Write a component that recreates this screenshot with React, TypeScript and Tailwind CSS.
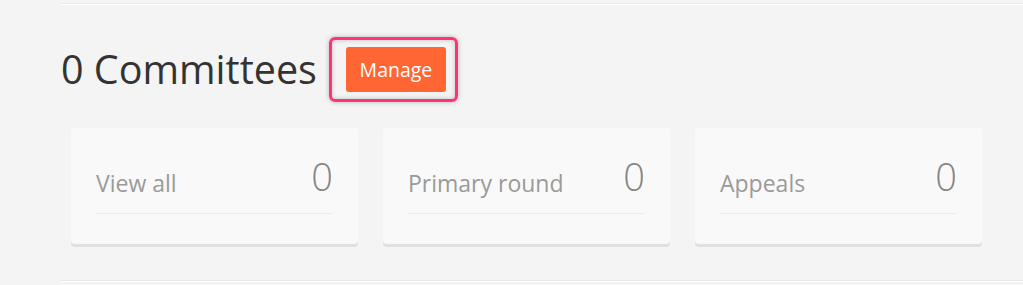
const stats = [
  { label: "View all", count: 0 },
  { label: "Primary round", count: 0 },
  { label: "Appeals", count: 0 },
];

const StatCard = ({ label, count }: { label: string; count: number }) => (
  <div className="w-[287px] h-[116px] bg-[#f9f9f9] rounded-[4px] shadow-[0_3px_0_#dde1e4] px-[25px] pt-[29px]">
    <div className="flex justify-between items-end">
      <span className="text-[23px] leading-none text-[#9a9a9a]">{label}</span>
      <span className="text-[38px] leading-none font-light text-[#858585]">{count}</span>
    </div>
    <div className="mt-[18px] h-px bg-[#ececec]" />
  </div>
);

export default function App() {
  return (
    <div
      className="w-full h-[285px] overflow-hidden bg-[#f4f4f4] pl-[61px] pt-[3px]"
      style={{ fontFamily: '"Segoe UI", "Open Sans", sans-serif' }}
    >
      <div className="h-px bg-[#ebebeb]" />
      <div className="h-px bg-white" />

      <div className="mt-[32px] flex items-center">
        <h2 className="text-[39.5px] leading-none font-normal text-[#333333]">0 Committees</h2>
        <div className="ml-[12px] rounded-[6px] border-[3px] border-[#ff3370] pt-[7px] pb-[7px] pl-[14px] pr-[9px] shadow-[0_0_5px_rgba(0,0,0,0.25),inset_0_0_5px_rgba(0,0,0,0.2)]">
          <button className="w-[100px] h-[45px] rounded-[3px] bg-[#ff6633] text-white text-[19.5px] font-medium leading-none">
            Manage
          </button>
        </div>
      </div>

      <div className="mt-[26px] ml-[10px] flex gap-[25px]">
        {stats.map((s) => (
          <StatCard key={s.label} label={s.label} count={s.count} />
        ))}
      </div>

      <div className="mt-[36px] h-px bg-[#e8e8e8]" />
      <div className="h-px bg-white" />
    </div>
  );
}
